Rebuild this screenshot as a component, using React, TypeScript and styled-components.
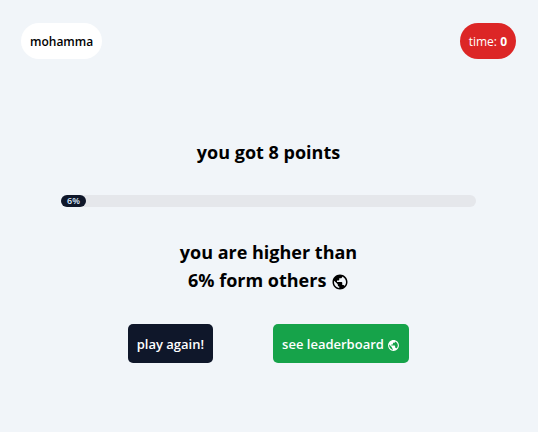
import React from "react";
import styled, { createGlobalStyle } from "styled-components";
import { MdPublic } from "react-icons/md";

const GlobalStyle = createGlobalStyle`
  *, *::before, *::after { box-sizing: border-box; }
  body {
    margin: 0;
    background: #f1f5f9;
    color: #000000;
    font-family: "Open Sans", "Noto Sans", sans-serif;
  }
`;

const Page = styled.main`
  min-height: 100vh;
  display: flex;
  flex-direction: column;
`;

const TopBar = styled.header`
  display: flex;
  justify-content: space-between;
  padding: 23px 22px 0 21px;
`;

const Pill = styled.div<{ $tone: "plain" | "alert" }>`
  padding: 10px 9px 8px;
  border-radius: 18px;
  font-size: 12px;
  line-height: 18px;
  font-weight: ${(p) => (p.$tone === "plain" ? 600 : 400)};
  color: ${(p) => (p.$tone === "plain" ? "#000000" : "#ffffff")};
  background: ${(p) => (p.$tone === "plain" ? "#ffffff" : "#dc2626")};
`;

const Result = styled.section`
  display: flex;
  flex-direction: column;
  align-items: center;
  padding: 79px 62px 0 61px;
`;

const Heading = styled.h1`
  margin: 0;
  font-size: 18px;
  line-height: 28px;
  font-weight: 700;
  text-align: center;
`;

const Track = styled.div`
  width: 100%;
  margin: 29px 0 31px;
  border-radius: 6px;
  background: #e5e7eb;
`;

const Fill = styled.div`
  min-width: 25px;
  border-radius: 6px;
  background: #0f172a;
  color: #dbeafe;
  font-size: 9px;
  line-height: 12px;
  font-weight: 600;
  text-align: center;
`;

const Comparison = styled(Heading).attrs({ as: "h2" })`
  max-width: 200px;
`;

const Globe = styled(MdPublic)`
  vertical-align: middle;
`;

const Actions = styled.div`
  display: flex;
  gap: 60px;
  margin-top: 30px;
`;

const Button = styled.button<{ $color: string }>`
  padding: 10px 9px 8px;
  border: 0;
  border-radius: 5px;
  background: ${(p) => p.$color};
  color: #ffffff;
  font: 600 13px/21px "Open Sans", "Noto Sans", sans-serif;
  white-space: nowrap;
  cursor: pointer;
`;

const percent = 6;

export default function App() {
  return (
    <>
      <GlobalStyle />
      <Page>
        <TopBar>
          <Pill $tone="plain">mohamma</Pill>
          <Pill $tone="alert">time: <b>0</b></Pill>
        </TopBar>
        <Result>
          <Heading>you got 8 points</Heading>
          <Track role="progressbar" aria-label="Score" aria-valuenow={percent} aria-valuemin={0} aria-valuemax={100}>
            <Fill style={{ width: `${percent}%` }}>{percent}%</Fill>
          </Track>
          <Comparison>
            you are higher than {percent}% form others <Globe size={18} aria-hidden />
          </Comparison>
          <Actions>
            <Button type="button" $color="#0f172a">play again!</Button>
            <Button type="button" $color="#16a34a">
              see leaderboard <Globe size={13} aria-hidden />
            </Button>
          </Actions>
        </Result>
      </Page>
    </>
  );
}
